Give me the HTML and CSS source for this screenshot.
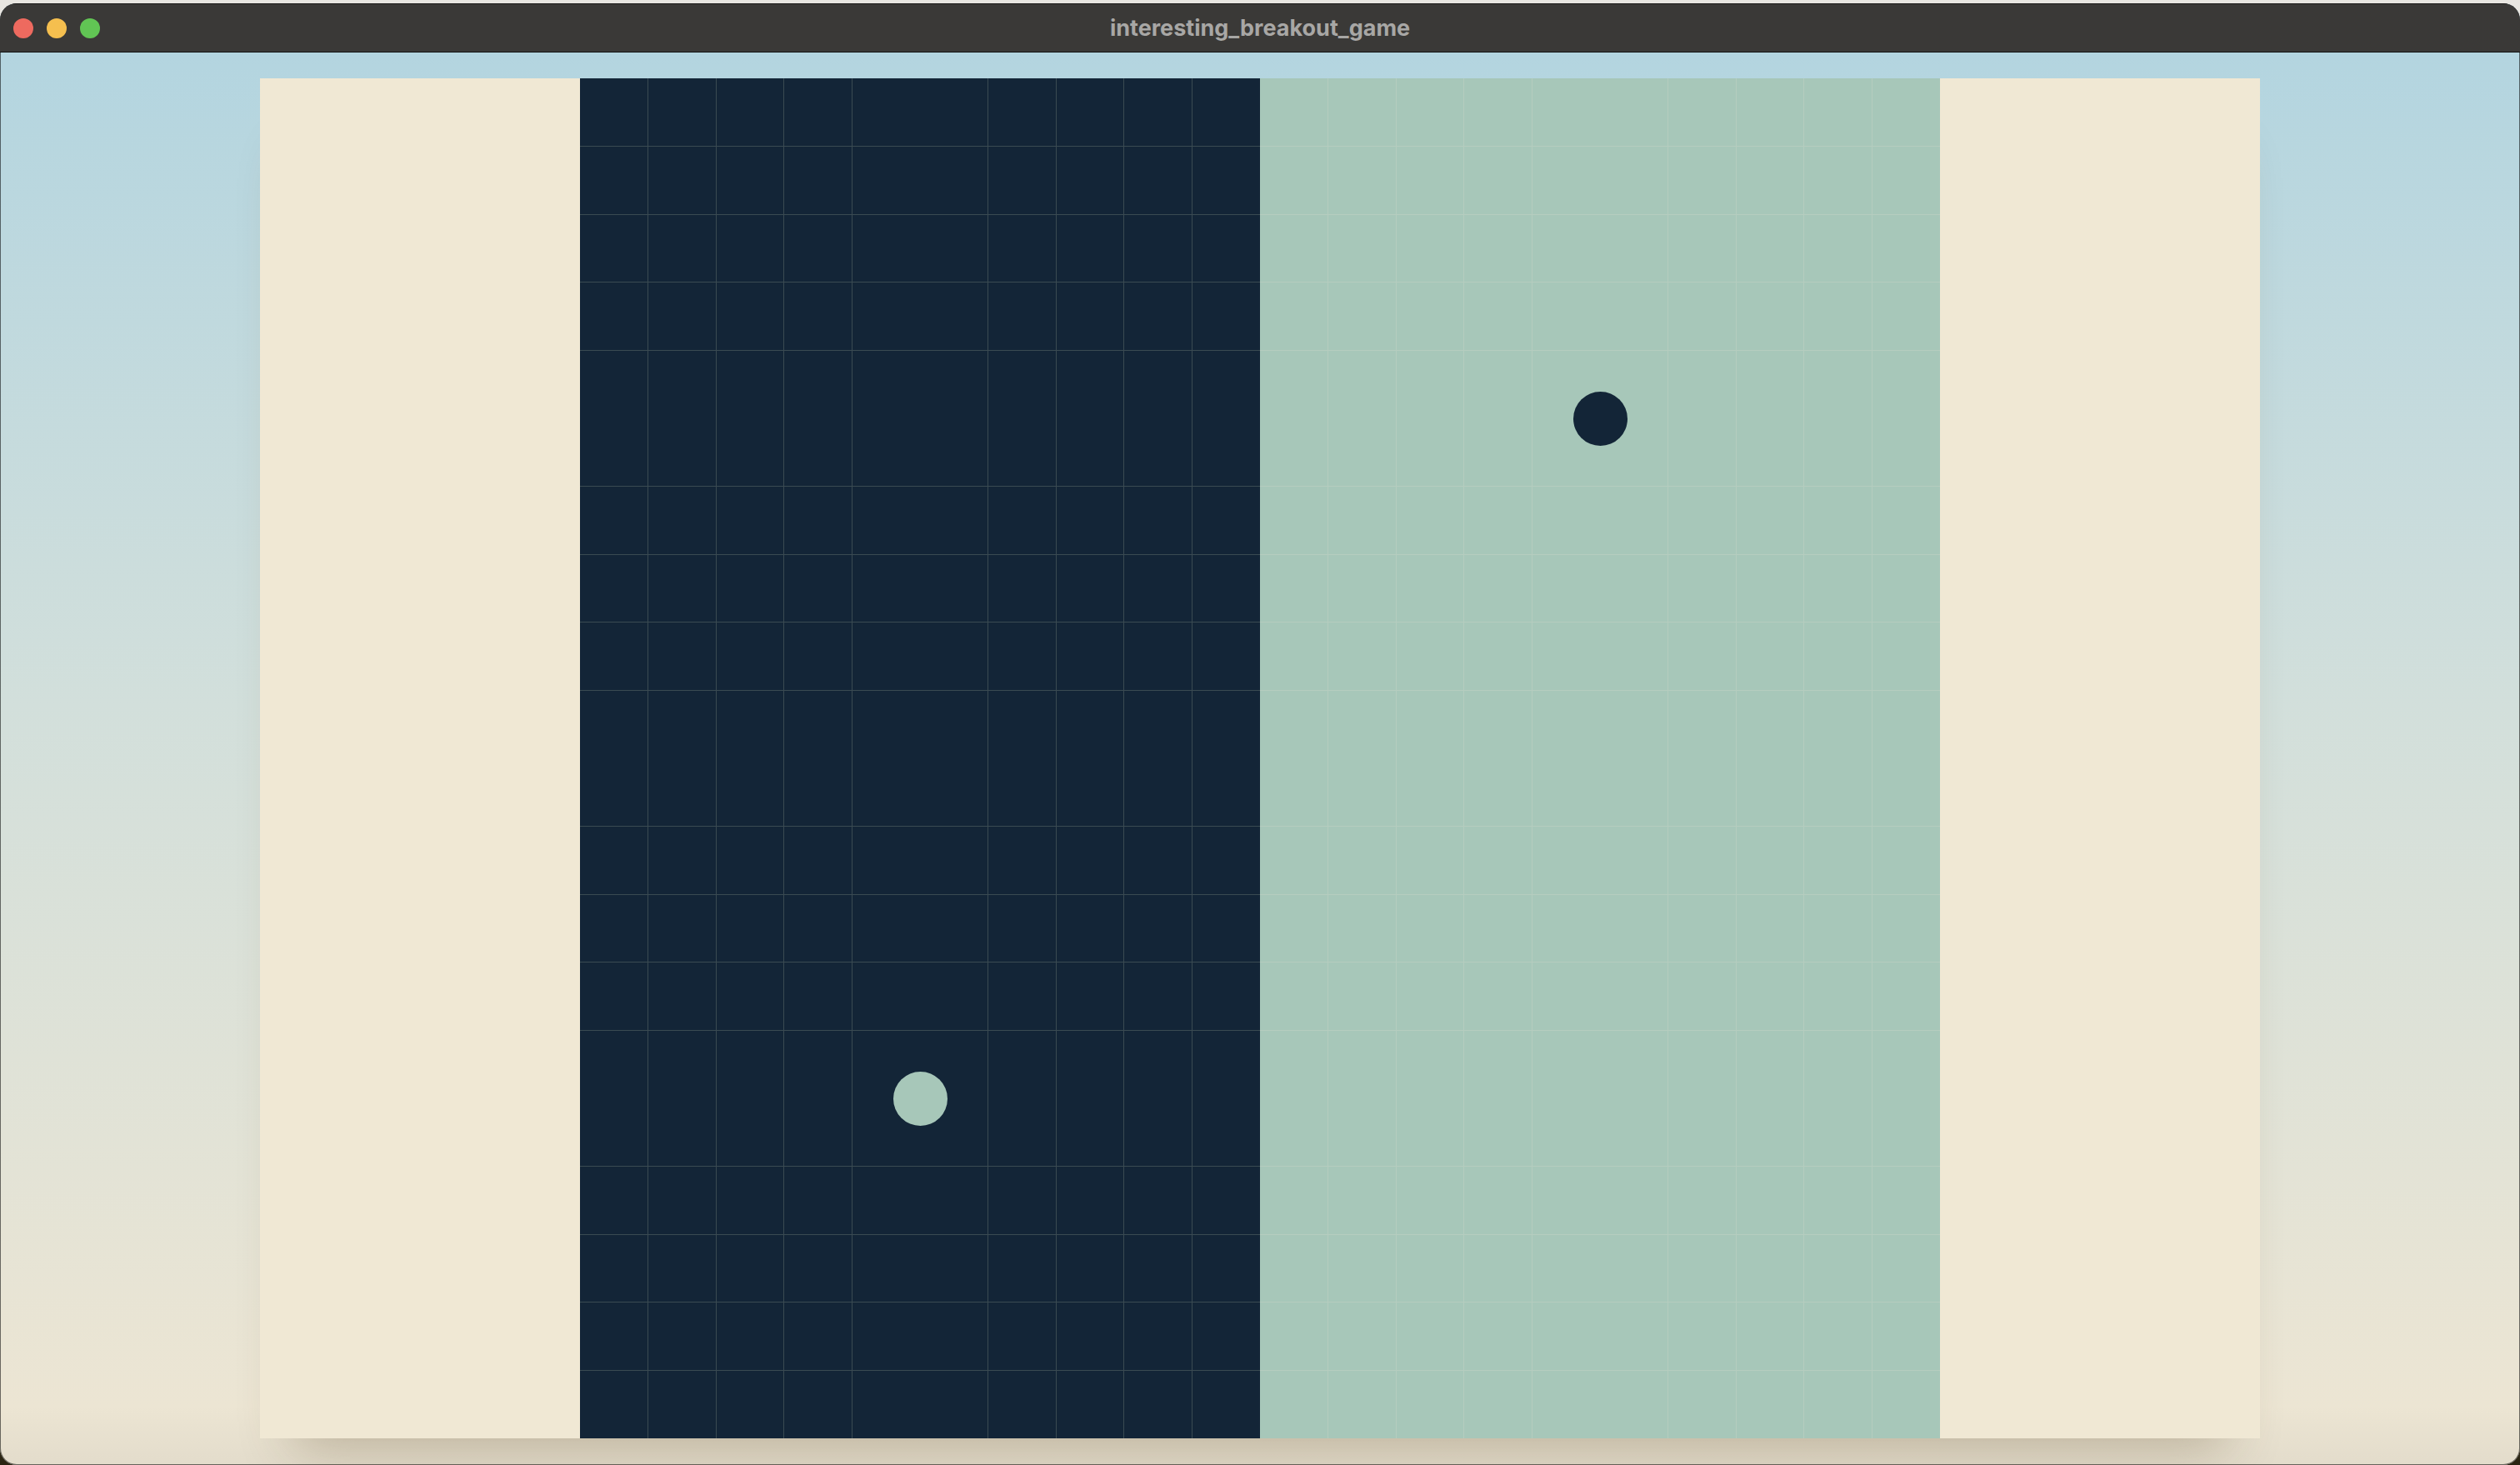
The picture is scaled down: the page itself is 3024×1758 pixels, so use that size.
FILE: index.html
```html
<!DOCTYPE html>
<html lang="en">
<head>
<meta charset="utf-8">
<title>interesting_breakout_game</title>
<link rel="stylesheet" href="styles.css">
</head>
<body>
<div class="window">
  <header class="titlebar">
    <div class="lights">
      <span class="light light-close"></span>
      <span class="light light-min"></span>
      <span class="light light-max"></span>
    </div>
    <div class="title">interesting_breakout_game</div>
  </header>
  <main class="content">
    <div class="board">
      <div class="side"></div>
      <div class="panel panel-night">
        <svg class="grid" viewBox="0 0 816 1632" width="816" height="1632" shape-rendering="crispEdges">
          <path class="grid-lines" d="M81 0h1v1632h-1zM163 0h1v1632h-1zM244 0h1v1632h-1zM326 0h1v1632h-1zM489 0h1v1632h-1zM571 0h1v1632h-1zM652 0h1v1632h-1zM734 0h1v1632h-1zM0 81h816v1h-816zM0 163h816v1h-816zM0 244h816v1h-816zM0 326h816v1h-816zM0 489h816v1h-816zM0 571h816v1h-816zM0 652h816v1h-816zM0 734h816v1h-816zM0 897h816v1h-816zM0 979h816v1h-816zM0 1060h816v1h-816zM0 1142h816v1h-816zM0 1305h816v1h-816zM0 1387h816v1h-816zM0 1468h816v1h-816zM0 1550h816v1h-816z"/>
        </svg>
        <div class="ball ball-day" style="left:375.5px; top:1191.5px"></div>
      </div>
      <div class="panel panel-day">
        <svg class="grid" viewBox="0 0 816 1632" width="816" height="1632" shape-rendering="crispEdges">
          <path class="grid-lines" d="M81 0h1v1632h-1zM163 0h1v1632h-1zM244 0h1v1632h-1zM326 0h1v1632h-1zM489 0h1v1632h-1zM571 0h1v1632h-1zM652 0h1v1632h-1zM734 0h1v1632h-1zM0 81h816v1h-816zM0 163h816v1h-816zM0 244h816v1h-816zM0 326h816v1h-816zM0 489h816v1h-816zM0 571h816v1h-816zM0 652h816v1h-816zM0 734h816v1h-816zM0 897h816v1h-816zM0 979h816v1h-816zM0 1060h816v1h-816zM0 1142h816v1h-816zM0 1305h816v1h-816zM0 1387h816v1h-816zM0 1468h816v1h-816zM0 1550h816v1h-816z"/>
        </svg>
        <div class="ball ball-night" style="left:375.5px; top:375.5px"></div>
      </div>
      <div class="side"></div>
    </div>
  </main>
</div>
</body>
</html>
```

FILE: styles.css
```css
* { box-sizing: border-box; }

html, body {
  margin: 0;
  padding: 0;
  width: 3024px;
  height: 1758px;
  overflow: hidden;
}

body {
  background: linear-gradient(to bottom, #e8e6e1 0%, #e8e6e1 50%, #2a2412 100%);
  font-family: "Inter", "Noto Sans", "Liberation Sans", sans-serif;
}

.window {
  margin-top: 4px;
  height: 1754px;
  width: 3024px;
  border-radius: 20px;
  overflow: hidden;
  display: flex;
  flex-direction: column;
  box-shadow: inset 0 0 0 1px rgba(0, 0, 0, 0.55);
  background: linear-gradient(to bottom, #b1d4e0 0%, #d2dfdb 48%, #ece5d3 96%, #e3dccb 100%);
}

.titlebar {
  position: relative;
  height: 59px;
  flex: 0 0 59px;
  background: #3a3937;
  border-top: 1px solid #1b1b1a;
  border-bottom: 1px solid #111111;
  display: flex;
  align-items: center;
  justify-content: center;
}

.lights {
  position: absolute;
  left: 16px;
  top: 0;
  bottom: 0;
  display: flex;
  align-items: center;
  gap: 16px;
}

.light {
  display: block;
  width: 24px;
  height: 24px;
  border-radius: 50%;
}

.light-close { background: #ee6a5f; }
.light-min { background: #f5bf4f; }
.light-max { background: #61c554; }

.title {
  color: #a8a7a5;
  font-size: 27px;
  font-weight: 700;
  line-height: 1;
  margin-top: -1px;
}

.content {
  flex: 1;
  display: flex;
  justify-content: center;
  align-items: flex-start;
  padding-top: 31px;
}

.board {
  width: 2400px;
  height: 1632px;
  display: flex;
  box-shadow: 0 50px 60px -40px rgba(80, 60, 25, 0.3);
}

.side {
  width: 384px;
  height: 100%;
  background: #f0e8d4;
}

.panel {
  position: relative;
  width: 816px;
  height: 100%;
  overflow: hidden;
}

.panel-night { background: #132537; }
.panel-day { background: #a7c7b9; }

.grid {
  display: block;
  width: 816px;
  height: 1632px;
}

.panel-night .grid-lines { fill: #3a4a52; }
.panel-day .grid-lines { fill: #b5cdbf; }

.ball {
  position: absolute;
  width: 65px;
  height: 65px;
  border-radius: 50%;
}

.ball-day { background: #a7c7b9; }
.ball-night { background: #132537; }
```
